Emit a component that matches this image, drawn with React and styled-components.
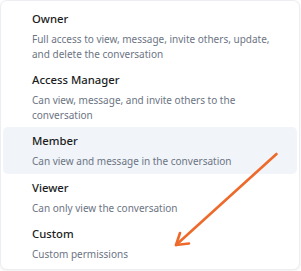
import React from "react";
import styled, { createGlobalStyle } from "styled-components";

const Global = createGlobalStyle`
  html, body { margin: 0; padding: 0; background: #ffffff; }
  body { font-family: "Noto Sans", "Open Sans", sans-serif; -webkit-font-smoothing: antialiased; }
`;

const Stage = styled.div`
  position: relative;
  width: 301px;
  height: 271px;
  overflow: hidden;
  background: #ffffff;
`;

const Panel = styled.div`
  box-sizing: border-box;
  width: 300px;
  height: 270px;
  background: #ffffff;
  border: 1px solid #eceef2;
  border-radius: 7px;
  box-shadow: 0 1px 3px rgba(20, 30, 50, 0.08);
  padding: 4px 2px;
  display: flex;
  flex-direction: column;
`;

const Item = styled.div`
  display: flex;
  flex-direction: column;
  gap: 5px;
  padding: 6px 20px 5px 29px;
  border-radius: 5px;
  background: ${(p) => (p.$active ? "#f1f4f9" : "transparent")};
`;

const Title = styled.div`
  font-size: 11.3px;
  line-height: 16px;
  font-weight: 500;
  color: #1b1d22;
`;

const Desc = styled.div`
  font-size: 10px;
  line-height: 14.5px;
  color: #6c7584;
`;

const Arrow = styled.svg`
  position: absolute;
  left: 0;
  top: 0;
  pointer-events: none;
`;

const roles = [
  { t: "Owner", d: "Full access to view, message, invite others, update, and delete the conversation" },
  { t: "Access Manager", d: "Can view, message, and invite others to the conversation" },
  { t: "Member", d: "Can view and message in the conversation", active: true },
  { t: "Viewer", d: "Can only view the conversation" },
  { t: "Custom", d: "Custom permissions" },
];

export default function App() {
  return (
    <Stage>
      <Global />
      <Panel>
        {roles.map((r) => (
          <Item key={r.t} $active={r.active}>
            <Title>{r.t}</Title>
            <Desc>{r.d}</Desc>
          </Item>
        ))}
      </Panel>
      <Arrow width="301" height="271" viewBox="0 0 301 271">
        <g stroke="#ee6a2b" strokeWidth="2.6" strokeLinecap="round" strokeLinejoin="round" fill="none">
          <line x1="276.5" y1="154" x2="176" y2="245" />
          <polyline points="180,233 176,245 189,243.5" />
        </g>
      </Arrow>
    </Stage>
  );
}
